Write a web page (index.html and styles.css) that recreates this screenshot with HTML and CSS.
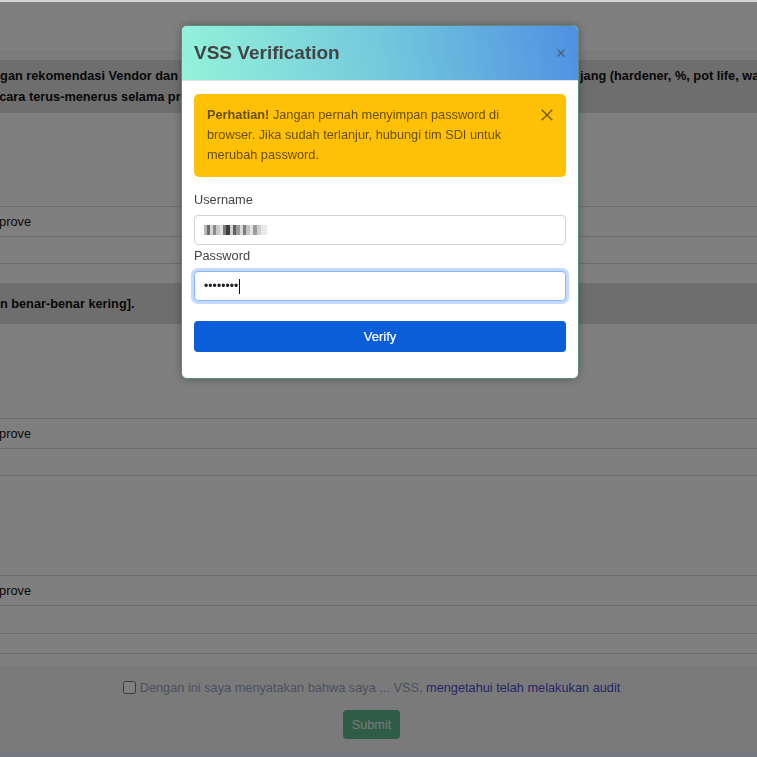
FILE: index.html
```html
<!DOCTYPE html>
<html lang="id">
<head>
<meta charset="utf-8">
<title>VSS Verification</title>
<link rel="stylesheet" href="styles.css">
</head>
<body>
<div class="topline"></div>
<main class="page">
  <div class="page-head"></div>
  <div class="thead-strip"></div>

  <div class="band band-tall">
    <div class="band-line split">
      <span class="clip cut-den">Dengan rekomendasi Vendor dan sesuai spesifikasi teknis pada lembar data penun</span>
      <span class="rest">jang (hardener, %, pot life, waktu pengeringan)</span>
    </div>
    <div class="band-line"><span class="clip cut-se">secara terus-menerus selama proses pengecatan berlangsung</span></div>
  </div>

  <div class="blank h93"></div>
  <div class="tr h30"><span class="clip cut-ap">Approve</span></div>
  <div class="tr h27"></div>
  <div class="tr h20"></div>

  <div class="band band-short">
    <div class="band-line"><span class="clip cut-da">dan benar-benar kering].</span></div>
  </div>

  <div class="blank h94"></div>
  <div class="tr h30"><span class="clip cut-ap">Approve</span></div>
  <div class="tr h27"></div>
  <div class="tr h100"></div>
  <div class="tr h30"><span class="clip cut-ap">Approve</span></div>
  <div class="tr h28"></div>
  <div class="tr h20"></div>
  <div class="tr h12"></div>

  <footer class="page-foot">
    <label class="agree">
      <input type="checkbox" class="agree-box">
      <span>Dengan ini saya menyatakan bahwa saya ... VSS, <a class="agree-link" href="#">mengetahui telah melakukan audit</a></span>
    </label>
    <button class="btn-submit" type="button" disabled>Submit</button>
  </footer>
  <div class="page-bottom"></div>
</main>

<div class="backdrop"></div>

<div class="modal" role="dialog" aria-label="VSS Verification">
  <div class="modal-header">
    <h5 class="modal-title">VSS Verification</h5>
    <button class="modal-close" type="button" aria-label="Close">
      <svg width="8" height="8" viewBox="0 0 8 8"><path d="M0.5 0.5L7.5 7.5M7.5 0.5L0.5 7.5" stroke="#4b5a6e" stroke-width="1.1" fill="none"/></svg>
    </button>
  </div>
  <div class="modal-body">
    <div class="alert">
      <div class="alert-text"><strong>Perhatian!</strong> Jangan pernah menyimpan password di browser. Jika sudah terlanjur, hubungi tim SDI untuk merubah password.</div>
      <button class="alert-close" type="button" aria-label="Close">
        <svg width="12" height="12" viewBox="0 0 12 12"><path d="M0.7 0.7L11.3 11.3M11.3 0.7L0.7 11.3" stroke="#6a5613" stroke-width="1.3" fill="none"/></svg>
      </button>
    </div>

    <div class="field">
      <label class="field-label">Username</label>
      <div class="input">
        <svg class="masked" width="70" height="14" viewBox="0 0 70 14">
          <rect x="0" y="2" width="3" height="10" fill="#b8b8b8"/>
          <rect x="3" y="2" width="3" height="10" fill="#6a6a6a"/>
          <rect x="6" y="2" width="3" height="10" fill="#d6d6d6"/>
          <rect x="9" y="2" width="3" height="10" fill="#8a8a8a"/>
          <rect x="12" y="2" width="4" height="10" fill="#c8c8c8"/>
          <rect x="16" y="2" width="3" height="10" fill="#e2e2e2"/>
          <rect x="19" y="2" width="3" height="10" fill="#7a7a7a"/>
          <rect x="22" y="2" width="4" height="10" fill="#3e3e3e"/>
          <rect x="26" y="2" width="3" height="10" fill="#cfcfcf"/>
          <rect x="29" y="2" width="3" height="10" fill="#606060"/>
          <rect x="32" y="2" width="4" height="10" fill="#9c9c9c"/>
          <rect x="36" y="2" width="3" height="10" fill="#dadada"/>
          <rect x="39" y="2" width="3" height="10" fill="#7c7c7c"/>
          <rect x="42" y="2" width="4" height="10" fill="#c4c4c4"/>
          <rect x="46" y="2" width="3" height="10" fill="#e4e4e4"/>
          <rect x="49" y="2" width="4" height="10" fill="#9a9a9a"/>
          <rect x="53" y="2" width="4" height="10" fill="#d0d0d0"/>
          <rect x="57" y="2" width="6" height="10" fill="#e8e8e8"/>
        </svg>
      </div>
    </div>

    <div class="field field-next">
      <label class="field-label">Password</label>
      <div class="input input-focus"><span class="dots">••••••••</span><span class="caret"></span></div>
    </div>

    <button class="btn-verify" type="button">Verify</button>
  </div>
</div>
</body>
</html>
```

FILE: styles.css
```css
* { box-sizing: border-box; }

html, body {
  margin: 0;
  height: 100%;
}

body {
  font-family: "Liberation Sans", Arial, sans-serif;
  font-size: 12.75px;
  color: #212529;
  background: #ffffff;
  overflow: hidden;
}

.topline {
  height: 2px;
  background: #d3d3d3;
}

.page {
  width: 100%;
}

.page-head { height: 48px; }

.thead-strip {
  height: 10px;
  background: #f6f6f6;
}

.band {
  background: #dcdcdc;
  font-weight: bold;
  font-size: 12.75px;
  color: #111;
}

.band-tall { padding: 5px 0 6px; }
.band-short { padding: 10px 0; }

.band-line {
  height: 21px;
  line-height: 21px;
  white-space: nowrap;
  overflow: hidden;
}

.split {
  display: grid;
  grid-template-columns: 580px 1fr;
}

.clip {
  display: block;
  overflow: hidden;
  white-space: nowrap;
}

.cut-den { text-indent: -24px; }
.cut-se { text-indent: -15px; }
.cut-da { text-indent: -15px; }
.cut-ap { text-indent: -16.5px; }

.rest {
  white-space: nowrap;
  overflow: hidden;
}

.h93 { height: 93px; }
.h94 { height: 94px; }

.tr {
  border-top: 1px solid #d4d4d4;
  display: flex;
  align-items: center;
  color: #111;
}

.h30 { height: 30px; }
.h27 { height: 27px; }
.h28 { height: 28px; }
.h20 { height: 20px; }
.h12 { height: 12px; }
.h100 { height: 100px; }

.page-foot {
  background: #f4f4f4;
  height: 87px;
  padding: 12px 14px 0 0;
  display: flex;
  flex-direction: column;
  align-items: center;
}

.agree {
  display: flex;
  align-items: center;
  height: 20px;
  color: #98a2c0;
  font-size: 12.75px;
}

.agree-box {
  width: 13px;
  height: 13px;
  margin: 0 4px 0 0;
}

.agree-link {
  color: #4a4ccc;
  text-decoration: none;
}

.btn-submit {
  margin-top: 13px;
  height: 29px;
  padding: 0 9px;
  border: none;
  border-radius: 4px;
  background: #5cb88e;
  color: #f0f4f2;
  font-family: inherit;
  font-size: 12.75px;
}

.page-bottom {
  height: 10px;
  background: #eeeefc;
}

.backdrop {
  position: fixed;
  top: 2px;
  left: 0;
  right: 0;
  bottom: 0;
  background: rgba(0, 0, 0, 0.5);
}

.modal {
  position: absolute;
  top: 25px;
  left: 181px;
  width: 398px;
  background: #ffffff;
  border: 1px solid #5e8a7a;
  border-radius: 6px;
  box-shadow: 0 0 8px rgba(0, 0, 0, 0.3);
  overflow: hidden;
}

.modal-header {
  height: 55px;
  display: flex;
  align-items: center;
  justify-content: space-between;
  padding: 0 12px 1px 12px;
  background: linear-gradient(78deg, #94f3da 0%, #74c9dc 50%, #4f90e2 100%);
  border-bottom: 1px solid #dee2e6;
}

.modal-title {
  margin: 0;
  font-size: 19px;
  font-weight: bold;
  color: #444444;
}

.modal-close {
  border: none;
  background: none;
  padding: 0;
  margin-right: 1px;
  display: flex;
}

.modal-body {
  padding: 13px 12px 26px;
}

.alert {
  display: flex;
  gap: 10px;
  background: #ffc107;
  color: #664d03;
  border-radius: 5px;
  padding: 11px 13px 12px 13px;
  line-height: 20px;
  font-size: 12.75px;
  margin-bottom: 13px;
}

.alert-text { flex: 1; }

.alert-close {
  border: none;
  background: none;
  padding: 0;
  margin-top: 4px;
  height: 12px;
  display: flex;
}

.field-next { margin-top: 1px; }

.field-label {
  display: block;
  height: 19px;
  line-height: 19px;
  margin-bottom: 6px;
  color: #444444;
  font-size: 12.75px;
}

.input {
  height: 30px;
  border: 1px solid #ced4da;
  border-radius: 4px;
  display: flex;
  align-items: center;
  padding: 0 9px;
  background: #fff;
}

.masked { display: block; }

.input-focus {
  border-color: #86b7fe;
  box-shadow: 0 0 0 3px rgba(13, 110, 253, 0.25);
}

.dots {
  font-size: 12px;
  color: #222;
  letter-spacing: 0.1px;
}

.caret {
  width: 1px;
  height: 15px;
  background: #111;
  margin-left: 1px;
}

.btn-verify {
  display: block;
  width: 100%;
  margin-top: 20px;
  height: 31px;
  border: none;
  border-radius: 4px;
  background: #0b5ed7;
  color: #ffffff;
  font-family: inherit;
  font-size: 13px;
  -webkit-text-stroke: 0.2px #ffffff;
}
```
